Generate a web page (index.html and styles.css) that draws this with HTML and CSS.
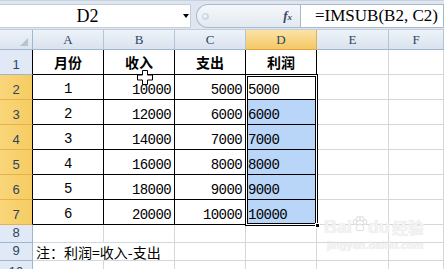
FILE: index.html
```html
<!DOCTYPE html>
<html lang="zh-CN">
<head>
<meta charset="utf-8">
<title>Excel IMSUB</title>
<link rel="stylesheet" href="styles.css">
</head>
<body>
<div class="app">
  <div class="topbar">
    <div class="namebox"><span class="nb-text">D2</span><span class="nb-arrow"></span></div>
    <div class="fxpill"><span class="knob"></span><span class="fx">f<span class="fx-x">x</span></span></div>
    <div class="formula">=IMSUB(B2, C2)</div>
  </div>

  <div class="sheet">
    <div class="corner"><span class="corner-tri"></span></div>
    <div class="ch">A</div><div class="ch">B</div><div class="ch">C</div><div class="ch ch-sel">D</div><div class="ch">E</div><div class="ch">F</div>

    <div class="rh rh-t">1</div>
    <div class="c t hd">月份</div><div class="c t hd">收入</div><div class="c t hd">支出</div><div class="c t hd">利润</div><div class="c"></div><div class="c"></div>

    <div class="rh rh-t rh-sel">2</div>
    <div class="c t mo">1</div><div class="c t num">10000</div><div class="c t num">5000</div><div class="c t res act">5000</div><div class="c"></div><div class="c"></div>

    <div class="rh rh-t rh-sel">3</div>
    <div class="c t mo">2</div><div class="c t num">12000</div><div class="c t num">6000</div><div class="c t res sel">6000</div><div class="c"></div><div class="c"></div>

    <div class="rh rh-t rh-sel">4</div>
    <div class="c t mo">3</div><div class="c t num">14000</div><div class="c t num">7000</div><div class="c t res sel">7000</div><div class="c"></div><div class="c"></div>

    <div class="rh rh-t rh-sel">5</div>
    <div class="c t mo">4</div><div class="c t num">16000</div><div class="c t num">8000</div><div class="c t res sel">8000</div><div class="c"></div><div class="c"></div>

    <div class="rh rh-t rh-sel">6</div>
    <div class="c t mo">5</div><div class="c t num">18000</div><div class="c t num">9000</div><div class="c t res sel">9000</div><div class="c"></div><div class="c"></div>

    <div class="rh rh-t rh-sel">7</div>
    <div class="c t mo">6</div><div class="c t num">20000</div><div class="c t num">10000</div><div class="c t res sel">10000</div><div class="c"></div><div class="c"></div>

    <div class="rh rh-s">8</div>
    <div class="c"></div><div class="c"></div><div class="c"></div><div class="c"></div><div class="c"></div><div class="c"></div>

    <div class="rh rh-s">9</div>
    <div class="c note">注：利润=收入-支出</div><div class="c"></div><div class="c"></div><div class="c"></div><div class="c"></div>

    <div class="rh rh-s rh-last">10</div>
    <div class="c"></div><div class="c"></div><div class="c"></div><div class="c"></div><div class="c"></div><div class="c"></div>
  </div>

  <div class="selection"><span class="handle"></span></div>

  <svg class="cursor" width="16" height="15" viewBox="0 0 16 15">
    <path d="M5.5 0.5 H10.5 V5 H15.5 V10 H10.5 V14.5 H5.5 V10 H0.5 V5 H5.5 Z" fill="#fff" stroke="#000" stroke-width="1"/>
  </svg>

  <div class="watermark">
    <div class="wm-logo"><span>Bai</span><svg class="paw" width="16" height="16" viewBox="0 0 16 16"><g fill="none" stroke="#e2e2e2" stroke-width="1.2"><ellipse cx="3" cy="6" rx="1.8" ry="2.3"/><ellipse cx="6.3" cy="2.8" rx="1.8" ry="2.3"/><ellipse cx="9.8" cy="2.8" rx="1.8" ry="2.3"/><ellipse cx="13" cy="6" rx="1.8" ry="2.3"/><path d="M8 8 C5 8 3.5 12 4.5 14 C6 15 10 15 11.5 14 C12.5 12 11 8 8 8 Z"/></g></svg><span>du</span><span class="wm-cn">经验</span></div>
    <div class="wm-url">jingyan.baidu.com</div>
  </div>
</div>
</body>
</html>
```
FILE: styles.css
```css
* { box-sizing: border-box; margin: 0; padding: 0; }

html, body {
  width: 444px;
  height: 269px;
  overflow: hidden;
  background: #fff;
}

body {
  font-family: "Liberation Sans", "Noto Sans CJK SC", sans-serif;
}

.app {
  position: relative;
  width: 444px;
  height: 269px;
  overflow: hidden;
}

/* ---------- formula bar ---------- */
.topbar {
  height: 30px;
  display: flex;
  padding: 3px 0 1px;
  background: #dfe6ef;
  border-top: 1px solid #c9d3df;
  border-bottom: 1px solid #c2cdda;
}

.namebox {
  width: 191px;
  background: #fff;
  border: 1px solid #c4ceda;
  border-left: none;
  display: flex;
  align-items: center;
  position: relative;
}

.nb-text {
  width: 175px;
  text-align: center;
  font-family: "Liberation Serif", serif;
  font-size: 18px;
  color: #000;
  line-height: 22px;
}

.nb-arrow {
  margin-left: 8px;
  width: 0;
  height: 0;
  border-left: 3px solid transparent;
  border-right: 3px solid transparent;
  border-top: 4px solid #000;
}

.fxpill {
  margin-left: 5px;
  width: 104px;
  background: linear-gradient(#f5f8fb, #e2e9f1);
  border: 1px solid #aab9cc;
  border-right: none;
  border-radius: 12px 0 0 12px;
  display: flex;
  align-items: center;
  justify-content: space-between;
  padding: 0 8px 0 5px;
}

.knob {
  width: 7px;
  height: 7px;
  border-radius: 50%;
  background: radial-gradient(circle at 40% 40%, #ffffff, #b9c5d4);
  border: 1px solid #c8d2de;
}

.fx {
  font-family: "Liberation Serif", serif;
  font-style: italic;
  font-weight: bold;
  font-size: 13px;
  color: #3a4a60;
}

.fx-x {
  font-size: 9px;
}

.formula {
  flex: 1;
  background: #fff;
  border: 1px solid #aab9cc;
  padding-left: 14px;
  font-family: "Liberation Serif", serif;
  font-size: 17px;
  line-height: 22px;
  color: #000;
  white-space: nowrap;
  overflow: hidden;
}

/* ---------- sheet grid ---------- */
.sheet {
  display: grid;
  grid-template-columns: 33px 71px 71px 71px 71px 72px 1fr;
  grid-template-rows: 20px repeat(7, 25px) 18px 18px 18px;
}

.corner {
  background: linear-gradient(#eef3f9, #dbe4ef);
  border-right: 1px solid #9eb6ce;
  border-bottom: 1px solid #9eb6ce;
  position: relative;
}

.corner-tri {
  position: absolute;
  right: 4px;
  bottom: 3px;
  width: 0;
  height: 0;
  border-left: 8px solid transparent;
  border-bottom: 8px solid #b7c3d1;
}

.ch {
  background: linear-gradient(#eef3f9, #d9e2ee);
  border-right: 1px solid #b3c4d8;
  border-bottom: 1px solid #9eb6ce;
  font-family: "Liberation Serif", serif;
  font-size: 13px;
  color: #2b4463;
  text-align: center;
  line-height: 19px;
}

.ch-sel {
  background: linear-gradient(#fbe3a6, #f4c865);
  border-bottom: 1px solid #e3a43a;
  border-right-color: #d9b05e;
}

.rh {
  background: #e0e9f5;
  border-right: 1px solid #9eb6ce;
  border-bottom: 1px solid #9eb6ce;
  font-family: "Liberation Sans", sans-serif;
  font-size: 13px;
  color: #2b4463;
  display: flex;
  align-items: flex-end;
  justify-content: center;
  padding-bottom: 2px;
  line-height: 14px;
}

.rh-last {
  align-items: flex-start;
  padding: 4px 0 0;
}

.rh-t {
  border-right-color: #000;
}

.rh-sel {
  background: linear-gradient(90deg, #f9d67a, #f6cc62);
  border-bottom-color: #e7b04c;
  color: #2b4463;
}

.c {
  border-right: 1px solid #d4d8de;
  border-bottom: 1px solid #d4d8de;
  display: flex;
  min-width: 0;
  white-space: nowrap;
}

.t {
  border-right-color: #000;
  border-bottom-color: #000;
}

.hd {
  font-family: "Noto Sans CJK SC", sans-serif;
  font-weight: bold;
  font-size: 14px;
  justify-content: center;
  align-items: center;
  color: #000;
}

.mo, .num, .res {
  font-family: "Liberation Mono", monospace;
  font-size: 14px;
  letter-spacing: -0.6px;
  color: #000;
  line-height: 14px;
}

.mo {
  justify-content: center;
  align-items: center;
  padding-top: 4px;
}

.num {
  justify-content: flex-end;
  align-items: flex-end;
  padding: 0 3px 2px 0;
}

.res {
  justify-content: flex-start;
  align-items: flex-end;
  padding: 0 0 2px 2px;
}

.sel {
  background: #b9d5f8;
}

.note {
  grid-column: span 2;
  font-family: "Noto Sans CJK SC", sans-serif;
  font-size: 14px;
  color: #000;
  align-items: center;
  padding-left: 3px;
  line-height: 16px;
}

/* ---------- overlays ---------- */
.selection {
  position: absolute;
  left: 245px;
  top: 74px;
  width: 73px;
  height: 152px;
  border: 1px solid #000;
  box-shadow: inset 0 0 0 1px #fff, inset 0 0 0 2px #000;
}

.handle {
  position: absolute;
  right: -3px;
  bottom: -3px;
  width: 5px;
  height: 5px;
  background: #000;
  border: 1px solid #fff;
}

.cursor {
  position: absolute;
  left: 137px;
  top: 70px;
}

.watermark {
  position: absolute;
  left: 324px;
  top: 216px;
  color: #f3f3f3;
  text-shadow: 0 0 1px #dadada;
  pointer-events: none;
}

.wm-logo {
  display: flex;
  align-items: center;
  font-family: "Liberation Sans", sans-serif;
  font-weight: bold;
  font-size: 18px;
  line-height: 22px;
}

.paw {
  margin: -6px 0 0 0;
}

.wm-cn {
  font-family: "Noto Sans CJK SC", sans-serif;
  font-size: 16px;
  margin-left: 2px;
}

.wm-url {
  font-family: "Liberation Sans", sans-serif;
  font-weight: bold;
  font-size: 11px;
  margin-left: 3px;
  line-height: 14px;
}
```
